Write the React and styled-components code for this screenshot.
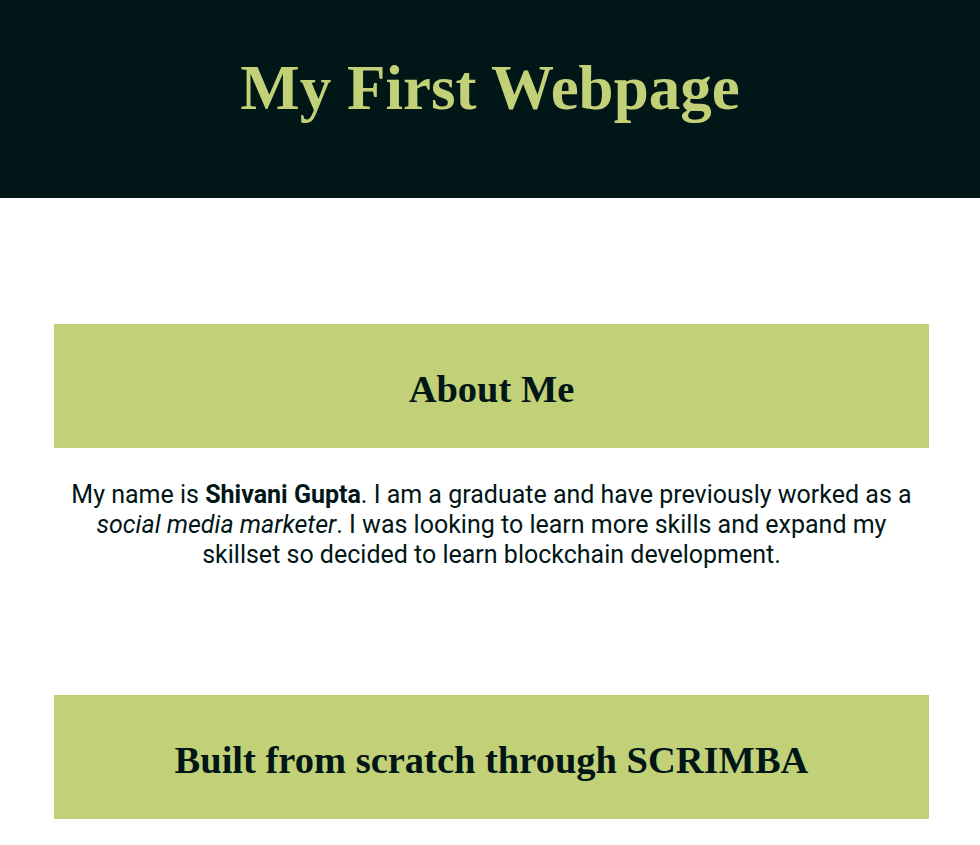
import styled, { createGlobalStyle } from "styled-components";

const GlobalStyle = createGlobalStyle`
body {
  margin: 0;
  background: #FFFFFF;
  font-family: Roboto, "Liberation Sans", sans-serif;
  color: #011616;
}
`

export default function App() {
    return (
        <>
            <GlobalStyle />
            <Header>
                <Title>My First Webpage</Title>
            </Header>
            <Main>
                <Section>
                    <Banner>
                        <SectionTitle>About Me</SectionTitle>
                    </Banner>
                    <Text>
                        My name is <strong>Shivani Gupta</strong>. I am a graduate and have previously worked as a <em>social media marketer</em>. I was looking to learn more skills and expand my skillset so decided to learn blockchain development.
                    </Text>
                </Section>
                <Section>
                    <Banner>
                        <SectionTitle>Built from scratch through SCRIMBA</SectionTitle>
                    </Banner>
                </Section>
            </Main>
        </>
    )
}

const Header = styled.header`
height: 198px;
box-sizing: border-box;
padding-bottom: 22px;
background-color: #011616;
display: flex;
align-items: center;
justify-content: center;
`

const Title = styled.h1`
margin: 0;
font-family: "Liberation Serif", "DejaVu Serif", serif;
font-weight: 700;
font-size: 63px;
color: #C2D077;
`

const Main = styled.main`
padding: 126px 51px 0 54px;
display: flex;
flex-direction: column;
gap: 125px;
`

const Section = styled.section`
display: flex;
flex-direction: column;
`

const Banner = styled.div`
height: 124px;
box-sizing: border-box;
padding-top: 6px;
background-color: #C2D077;
display: flex;
align-items: center;
justify-content: center;
`

const SectionTitle = styled.h2`
margin: 0;
font-family: "Liberation Serif", "DejaVu Serif", serif;
font-weight: 700;
font-size: 38.5px;
color: #011616;
`

const Text = styled.p`
margin: 32px 0 0;
padding: 0 10px;
text-align: center;
font-size: 25px;
line-height: 30px;
color: #011616;
`
